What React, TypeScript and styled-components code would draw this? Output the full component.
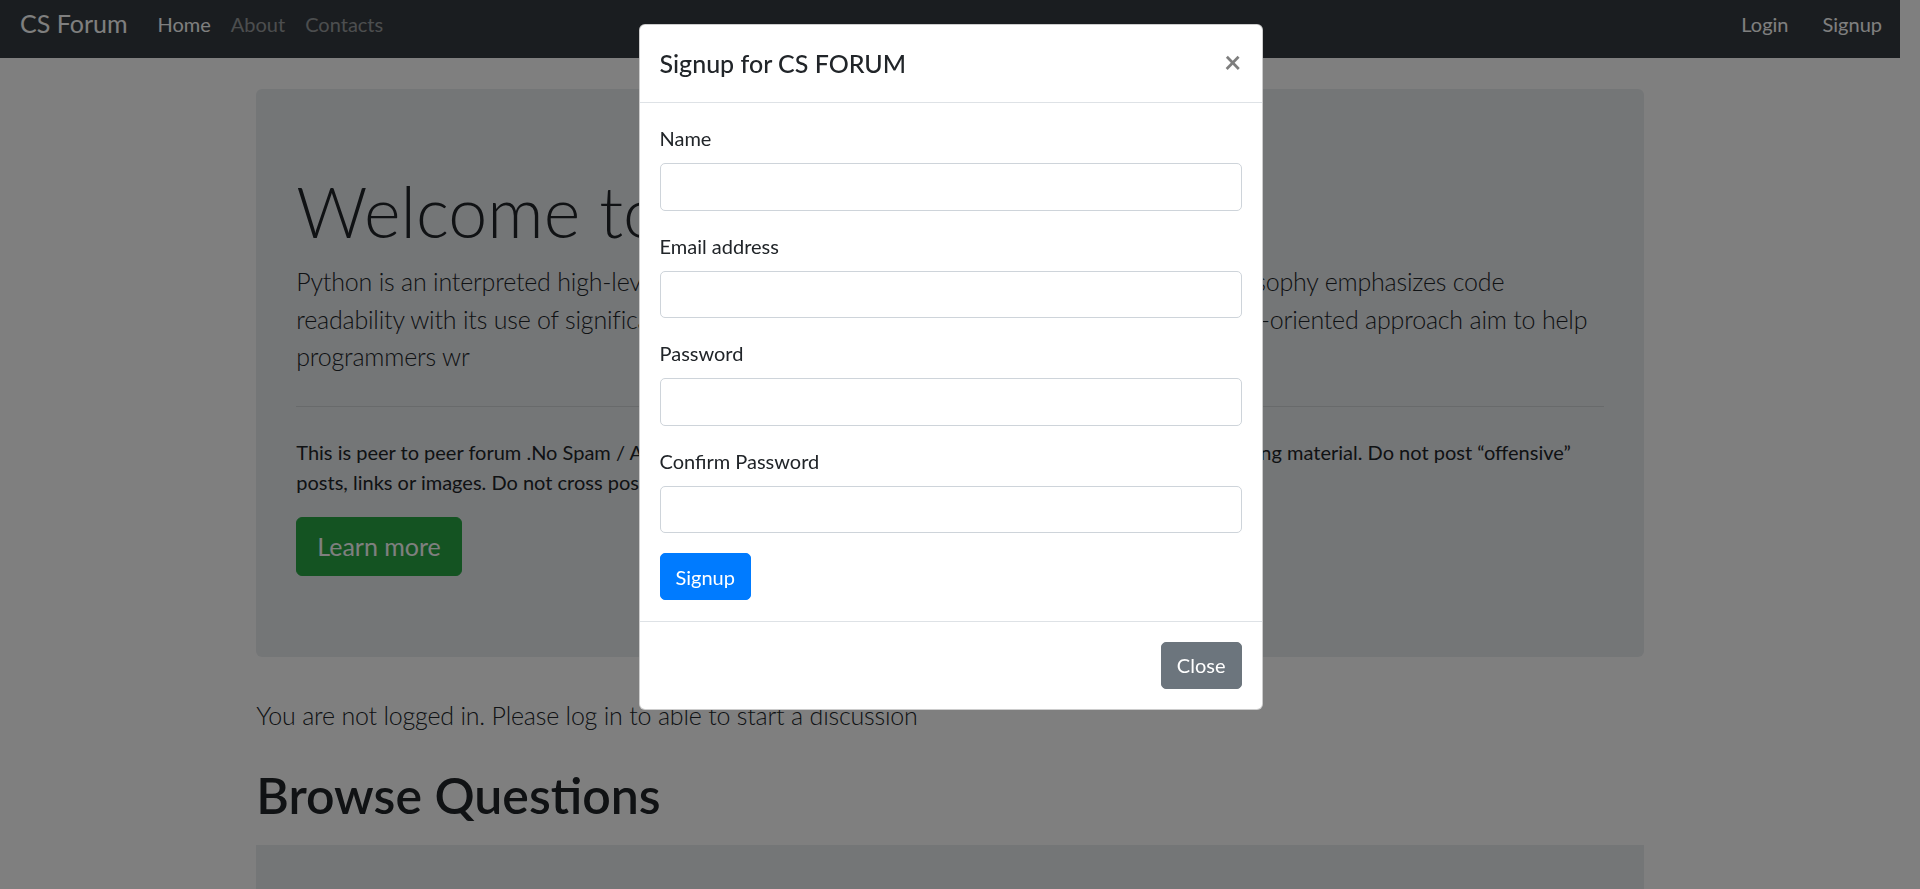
import React from "react";
import styled, { createGlobalStyle } from "styled-components";

const GlobalStyle = createGlobalStyle`
  *, *::before, *::after { box-sizing: border-box; }
  html, body { height: 100%; }
  body {
    margin: 0;
    padding-right: 20px;
    overflow: hidden;
    background: #fff;
    color: #212529;
    font-family: "Segoe UI", Lato, "Open Sans", sans-serif;
    font-size: 20px;
    line-height: 1.5;
    font-weight: 400;
  }
`;

/* ---------- Navbar ---------- */
const Navbar = styled.nav`
  display: flex;
  align-items: center;
  height: 58px;
  padding: 0 3px 11px 20px;
  background: #343a40;
`;

const Brand = styled.a`
  font-size: 25px;
  line-height: 1.5;
  color: #fff;
  margin-right: 20px;
  text-decoration: none;
  white-space: nowrap;
`;

const NavList = styled.ul`
  display: flex;
  list-style: none;
  margin: 0;
  padding: 0;
`;

const NavLink = styled.a<{ $active?: boolean }>`
  display: block;
  padding: 0 10px;
  font-size: 20px;
  line-height: 1.5;
  color: ${(p) => (p.$active ? "#fff" : "rgba(255,255,255,.5)")};
  text-decoration: none;
`;

const RightNav = styled.div`
  display: flex;
  gap: 4px;
  margin-left: auto;
`;

const NavButton = styled.button`
  background: transparent;
  border: 0;
  padding: 0 15px;
  font: inherit;
  font-size: 20px;
  line-height: 1.5;
  color: #fff;
  cursor: pointer;
`;

/* ---------- Page ---------- */
const Container = styled.div`
  max-width: 1425px;
  margin: 0 auto;
  padding: 0 18.75px;
`;

const Jumbotron = styled.section`
  background: #e9ecef;
  border-radius: 6px;
  padding: 80px 40px 81px;
  margin: 31px 0 40px;
`;

const Display = styled.h1`
  margin: 0 0 10px;
  font-size: 70px;
  font-weight: 300;
  line-height: 1.2;
  white-space: nowrap;
`;

const Lead = styled.p`
  margin: 0 0 20px;
  font-size: 25px;
  font-weight: 300;
  line-height: 1.5;
  letter-spacing: -0.2px;
`;

const Rule = styled.hr`
  margin: 30px 0;
  border: 0;
  border-top: 1px solid rgba(0, 0, 0, 0.1);
`;

const Text = styled.p`
  margin: 0 0 20px;
  font-size: 20px;
  line-height: 1.5;
`;

const Button = styled.button<{ $variant: "success" | "primary" | "secondary"; $large?: boolean }>`
  display: inline-block;
  font-family: inherit;
  font-weight: 400;
  color: #fff;
  background: ${(p) => ({ success: "#28a745", primary: "#007bff", secondary: "#6c757d" }[p.$variant])};
  border: 1px solid ${(p) => ({ success: "#28a745", primary: "#007bff", secondary: "#6c757d" }[p.$variant])};
  font-size: ${(p) => (p.$large ? "25px" : "20px")};
  line-height: 1.5;
  padding: ${(p) => (p.$large ? "10px 20px" : "7.5px 15px")};
  border-radius: ${(p) => (p.$large ? "6px" : "5px")};
  cursor: pointer;
`;

const SectionTitle = styled.h1`
  margin: 0 0 10px;
  padding: 10px 0;
  font-size: 50px;
  font-weight: 600;
  line-height: 1.2;
`;

const QuestionsBox = styled.div`
  background: #e9ecef;
  height: 320px;
`;

/* ---------- Modal ---------- */
const Backdrop = styled.div`
  position: fixed;
  inset: 0;
  background: rgba(0, 0, 0, 0.5);
  z-index: 1040;
`;

const ModalLayer = styled.div`
  position: fixed;
  inset: 0;
  z-index: 1050;
  display: flex;
  justify-content: center;
  align-items: flex-start;
  padding-right: 19px;
`;

const ModalDialog = styled.div`
  width: 624px;
  margin-top: 24px;
  background: #fff;
  border: 1px solid rgba(0, 0, 0, 0.2);
  border-radius: 6px;
  display: flex;
  flex-direction: column;
`;

const ModalHeader = styled.div`
  display: flex;
  align-items: flex-start;
  padding: 20px 20px 19.5px;
  border-bottom: 1px solid #dee2e6;
`;

const ModalTitle = styled.h5`
  margin: 0;
  font-size: 25px;
  font-weight: 500;
  line-height: 1.5;
`;

const CloseX = styled.button`
  margin-left: auto;
  margin-top: 1px;
  padding: 0;
  background: transparent;
  border: 0;
  font-family: inherit;
  font-size: 30px;
  font-weight: 700;
  line-height: 1;
  color: #000;
  opacity: 0.5;
  text-shadow: 0 1px 0 #fff;
  cursor: pointer;
`;

const ModalBody = styled.form`
  padding: 20px 20px 20.5px;
`;

const FormGroup = styled.div`
  margin-bottom: 20px;
`;

const Label = styled.label`
  display: inline-block;
  margin-bottom: 10px;
  font-size: 20px;
  line-height: 1.5;
`;

const Input = styled.input`
  display: block;
  width: 100%;
  height: 47.5px;
  padding: 7.5px 15px;
  font-family: inherit;
  font-size: 20px;
  color: #495057;
  background: #fff;
  border: 1px solid #ced4da;
  border-radius: 5px;
`;

const ModalFooter = styled.div`
  display: flex;
  justify-content: flex-end;
  align-items: center;
  padding: 15px;
  border-top: 1px solid #dee2e6;
  & > * {
    margin: 5px;
  }
`;

const fields = [
  { id: "name", label: "Name", type: "text" },
  { id: "email", label: "Email address", type: "email" },
  { id: "password", label: "Password", type: "password" },
  { id: "cpassword", label: "Confirm Password", type: "password" },
];

export default function App() {
  return (
    <>
      <GlobalStyle />
      <Navbar>
        <Brand href="#">CS Forum</Brand>
        <NavList>
          <li>
            <NavLink href="#" $active>
              Home
            </NavLink>
          </li>
          <li>
            <NavLink href="#">About</NavLink>
          </li>
          <li>
            <NavLink href="#">Contacts</NavLink>
          </li>
        </NavList>
        <RightNav>
          <NavButton>Login</NavButton>
          <NavButton>Signup</NavButton>
        </RightNav>
      </Navbar>

      <Container>
        <Jumbotron>
          <Display>Welcome to Python Forums</Display>
          <Lead>
            Python is an interpreted high-level general-purpose programming language. Its design philosophy emphasizes
            code readability with its use of significant indentation. Its language constructs as well as its
            object-oriented approach aim to help programmers wr
          </Lead>
          <Rule />
          <Text>
            This is peer to peer forum .No Spam / Advertising / Self-promote is not allowed. Do not post
            copyright-infringing material. Do not post “offensive” posts, links or images. Do not cross post questions.
            Remain respectful of other members at all times.
          </Text>
          <Button $variant="success" $large>
            Learn more
          </Button>
        </Jumbotron>

        <Lead>You are not logged in. Please log in to able to start a discussion</Lead>
        <SectionTitle>Browse Questions</SectionTitle>
        <QuestionsBox />
      </Container>

      <Backdrop />
      <ModalLayer>
        <ModalDialog role="dialog">
          <ModalHeader>
            <ModalTitle>Signup for CS FORUM</ModalTitle>
            <CloseX type="button" aria-label="Close">
              ×
            </CloseX>
          </ModalHeader>
          <ModalBody onSubmit={(e) => e.preventDefault()}>
            {fields.map((f) => (
              <FormGroup key={f.id}>
                <Label htmlFor={f.id}>{f.label}</Label>
                <Input id={f.id} type={f.type} />
              </FormGroup>
            ))}
            <Button type="submit" $variant="primary">
              Signup
            </Button>
          </ModalBody>
          <ModalFooter>
            <Button type="button" $variant="secondary">
              Close
            </Button>
          </ModalFooter>
        </ModalDialog>
      </ModalLayer>
    </>
  );
}
